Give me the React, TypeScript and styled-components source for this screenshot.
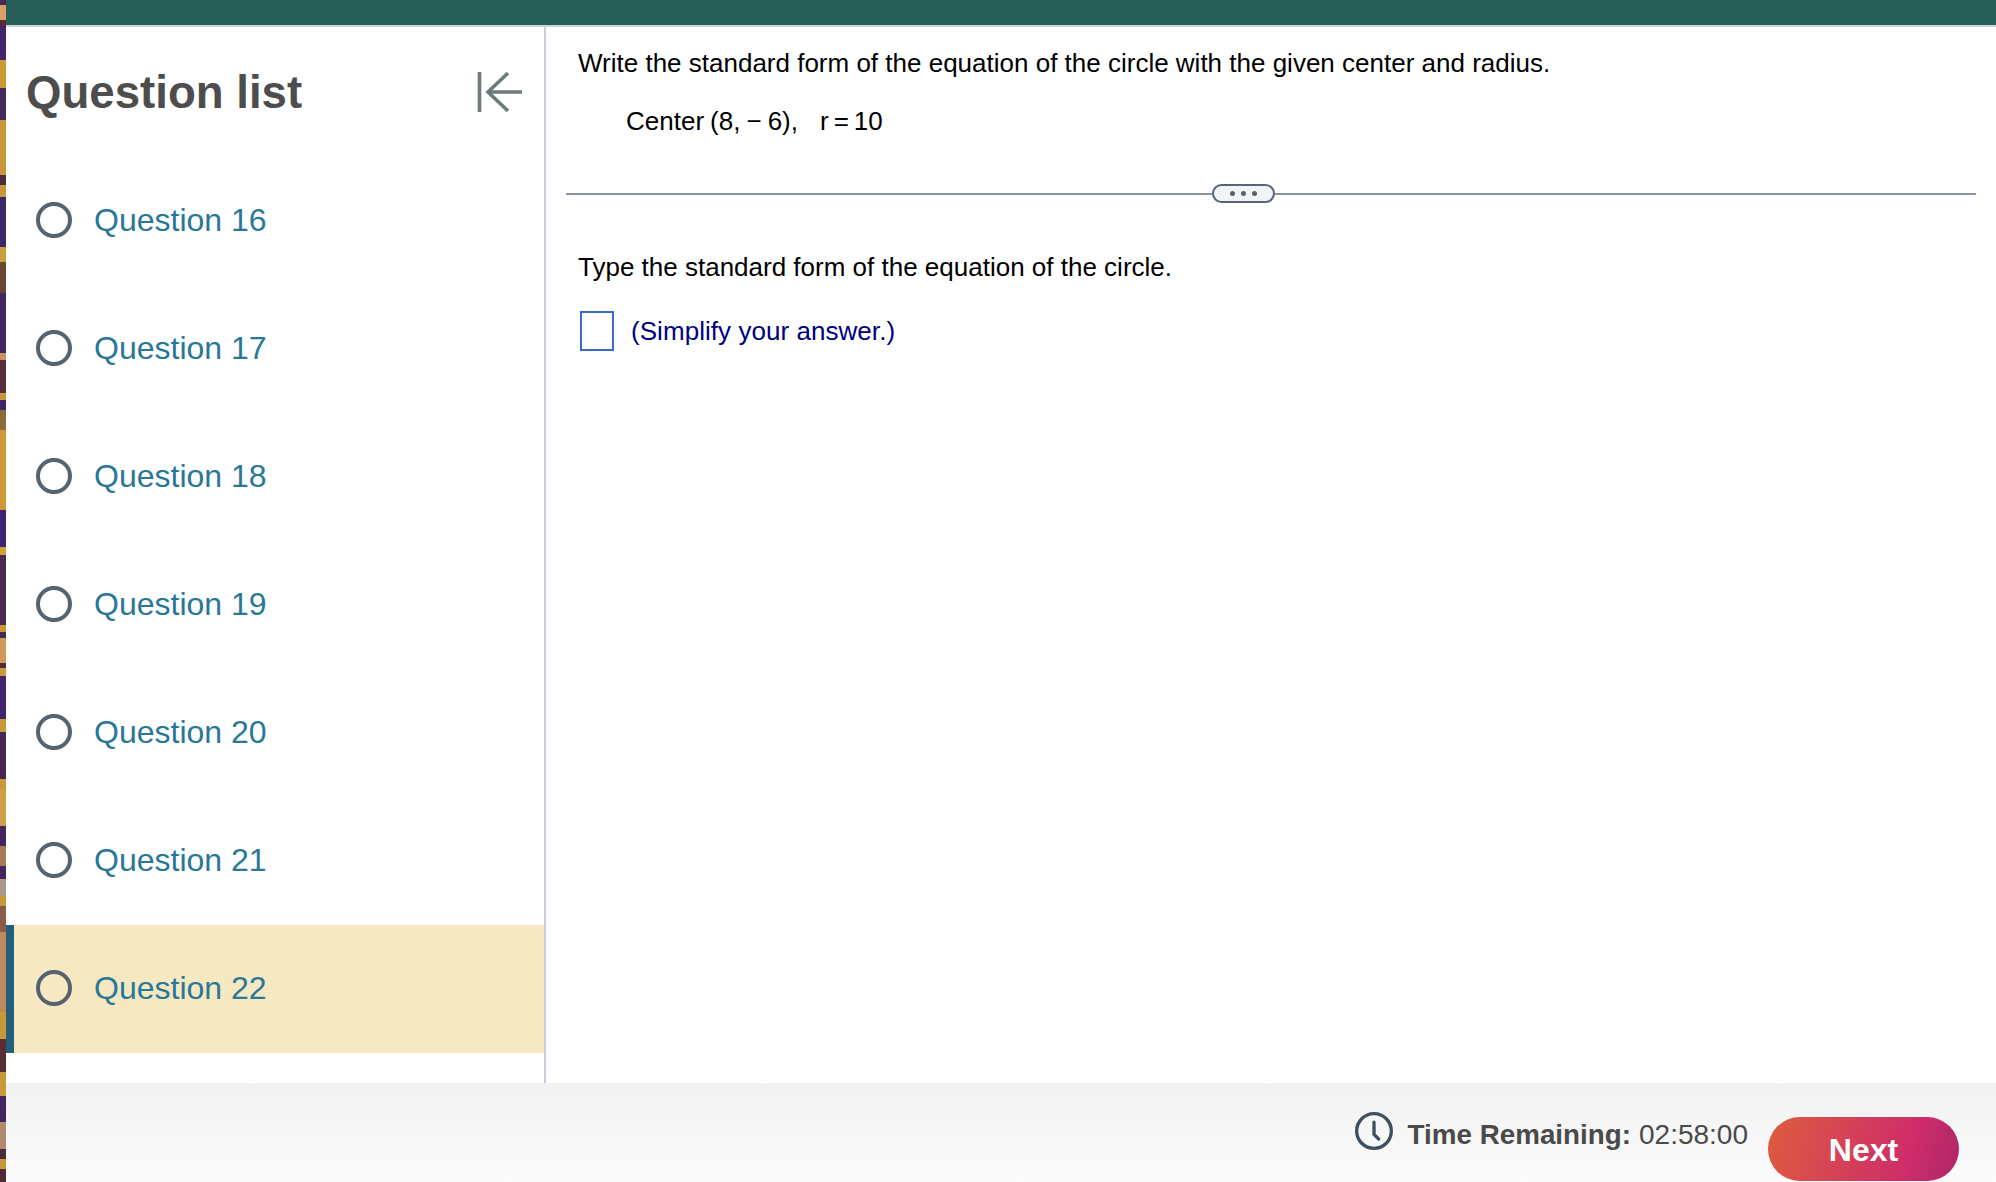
import React from 'react';
import styled, { createGlobalStyle } from 'styled-components';

const GlobalStyle = createGlobalStyle`
  html, body {
    margin: 0;
    padding: 0;
    background: #fff;
  }
  body {
    font-family: "Liberation Sans", Arial, sans-serif;
  }
`;

const Page = styled.div`
  display: flex;
  width: 1996px;
  height: 1182px;
  overflow: hidden;
`;

const Strip = styled.svg`
  display: block;
  flex: 0 0 6px;
  width: 6px;
  height: 1182px;
`;

const Main = styled.div`
  flex: 1;
  display: flex;
  flex-direction: column;
  min-width: 0;
`;

const TopBar = styled.div`
  flex: 0 0 25px;
  background: #285e58;
  border-bottom: 2px solid #c9d5d6;
`;

const Body = styled.div`
  flex: 1;
  display: flex;
  min-height: 0;
`;

const Sidebar = styled.aside`
  flex: 0 0 538px;
  border-right: 2px solid #c8d0de;
`;

const SidebarHeader = styled.div`
  height: 130px;
  display: flex;
  align-items: center;
  justify-content: space-between;
  padding: 2px 21px 0 20px;
  box-sizing: border-box;
`;

const Title = styled.h1`
  margin: 0;
  font-size: 45.6px;
  line-height: 52px;
  font-weight: 700;
  color: #4d4d4d;
`;

const CollapseIcon = styled.svg`
  display: block;
  width: 46px;
  height: 42px;
  margin-top: -3px;
`;

const QuestionRow = styled.div<{ $current?: boolean }>`
  height: 128px;
  display: flex;
  align-items: center;
  gap: 22px;
  box-sizing: border-box;
  padding-left: ${(p) => (p.$current ? '22px' : '30px')};
  padding-bottom: 3px;
  background: ${(p) => (p.$current ? '#f6e9c1' : 'transparent')};
  border-left: ${(p) => (p.$current ? '8px solid #235f7a' : 'none')};
`;

const Radio = styled.span`
  flex: 0 0 36px;
  width: 36px;
  height: 36px;
  box-sizing: border-box;
  border: 4px solid #56626f;
  border-radius: 50%;
`;

const QuestionLabel = styled.span`
  font-size: 32px;
  line-height: 40px;
  color: #2a7898;
`;

const Content = styled.main`
  flex: 1;
  min-width: 0;
  padding-top: 20px;
`;

const Prompt = styled.p`
  margin: 0 0 0 32px;
  font-size: 26px;
  line-height: 32px;
  color: #000;
`;

const Given = styled.p`
  margin: 26px 0 0 80px;
  font-size: 26px;
  line-height: 32px;
  color: #000;
  word-spacing: -1.2px;
`;

const Radius = styled.span`
  margin-left: 22px;
  word-spacing: -2.2px;
`;

const Divider = styled.div`
  display: flex;
  align-items: center;
  margin: 47px 0 0 20px;
  width: 1410px;
`;

const DividerLine = styled.span<{ $width?: number }>`
  flex: ${(p) => (p.$width ? `0 0 ${p.$width}px` : '1')};
  height: 2px;
  background: #8a92a4;
`;

const DividerPill = styled.span`
  flex: 0 0 63px;
  height: 19px;
  box-sizing: border-box;
  display: flex;
  align-items: center;
  justify-content: center;
  gap: 6px;
  background: #f3f4f7;
  border: 2px solid #56657a;
  border-radius: 10px;
`;

const Dot = styled.i`
  width: 5px;
  height: 5px;
  border-radius: 50%;
  background: #56626f;
`;

const Instruction = styled.p`
  margin: 48px 0 0 32px;
  font-size: 26px;
  line-height: 32px;
  color: #000;
`;

const AnswerRow = styled.div`
  display: flex;
  align-items: center;
  gap: 17px;
  margin: 28px 0 0 34px;
`;

const AnswerBox = styled.span`
  width: 34px;
  height: 40px;
  box-sizing: border-box;
  border: 2px solid #3a6cc6;
`;

const Hint = styled.span`
  font-size: 26px;
  line-height: 32px;
  letter-spacing: 0.05px;
  color: #000080;
`;

const Footer = styled.footer`
  flex: 0 0 99px;
  display: flex;
  justify-content: flex-end;
  align-items: flex-start;
  box-sizing: border-box;
  padding: 28px 37px 0 0;
  background: linear-gradient(180deg, #f2f2f2 0%, #fbfbfb 100%);
`;

const Timer = styled.div`
  display: flex;
  align-items: center;
  height: 38px;
  color: #4a4a4a;
`;

const ClockIcon = styled.svg`
  display: block;
  width: 40px;
  height: 40px;
  margin: 2px 14px 0 0;
`;

const TimerLabel = styled.strong`
  font-size: 27.8px;
  line-height: 40px;
  margin-top: 9px;
`;

const TimerValue = styled.span`
  font-size: 28px;
  line-height: 40px;
  margin: 9px 0 0 8px;
`;

const NextButton = styled.button`
  width: 191px;
  height: 64px;
  margin: 6px 0 0 20px;
  padding: 3px 0 0;
  border: none;
  border-radius: 32px;
  background: linear-gradient(105deg, #dd5c3e 0%, #cf2d69 72%, #ae2668 100%);
  color: #fff;
  font-family: inherit;
  font-size: 32px;
  font-weight: 700;
  line-height: 61px;
`;

// bands of the page background that shows down the left edge
const stripBands: [number, string][] = [
  [5, '#4a2a55'], [15, '#d9a066'], [6, '#5a2a3c'], [34, '#40256e'], [28, '#c99a32'],
  [32, '#47285e'], [55, '#c9983a'], [10, '#4a2f3a'], [12, '#c9983a'], [50, '#3c2768'],
  [15, '#c9a03a'], [31, '#6a4434'], [60, '#41265f'], [7, '#c98f5c'], [33, '#5a2c40'],
  [7, '#c9983a'], [10, '#3f2566'], [20, '#8a6a38'], [80, '#cc9a3a'], [37, '#3e2470'],
  [8, '#d0a03a'], [70, '#4a2a4e'], [7, '#c9983a'], [6, '#3e2a4c'], [25, '#cf9a5a'],
  [5, '#4a2a3c'], [8, '#c9983a'], [43, '#40256a'], [13, '#c9983a'], [47, '#472750'],
  [10, '#c9983a'], [37, '#cf9f4a'], [20, '#42285e'], [20, '#a87a58'], [13, '#42285e'],
  [17, '#a99a88'], [10, '#c9983a'], [26, '#8a5a4a'], [80, '#c08a5c'], [27, '#c9983a'],
  [33, '#5a2c34'], [24, '#c9983a'], [26, '#40265e'], [27, '#b08a6a'], [10, '#4a2a3c'],
  [10, '#c9983a'], [14, '#4f2a3a'],
];

const renderStrip = () => {
  let y = 0;
  return stripBands.map(([h, color]) => {
    const band = <rect key={y} x="0" y={y} width="6" height={h} fill={color} />;
    y += h;
    return band;
  });
};

const questions = [16, 17, 18, 19, 20, 21, 22];

const App = () => {
  return (
    <>
      <GlobalStyle />
      <Page>
        <Strip viewBox="0 0 6 1182" preserveAspectRatio="none">
          {renderStrip()}
        </Strip>
        <Main>
          <TopBar />
          <Body>
            <Sidebar>
              <SidebarHeader>
                <Title>Question list</Title>
                <CollapseIcon viewBox="0 0 46 42" fill="none" stroke="#6f7a7c" strokeWidth="3.6">
                  <path d="M2.5 1v40" />
                  <path d="M45 21H11" />
                  <path d="M31 2 11 21l20 19" />
                </CollapseIcon>
              </SidebarHeader>
              {questions.map((n) => (
                <QuestionRow key={n} $current={n === 22}>
                  <Radio />
                  <QuestionLabel>Question {n}</QuestionLabel>
                </QuestionRow>
              ))}
            </Sidebar>
            <Content>
              <Prompt>Write the standard form of the equation of the circle with the given center and radius.</Prompt>
              <Given>
                Center (8, − 6),
                <Radius>r = 10</Radius>
              </Given>
              <Divider>
                <DividerLine $width={646} />
                <DividerPill>
                  <Dot />
                  <Dot />
                  <Dot />
                </DividerPill>
                <DividerLine />
              </Divider>
              <Instruction>Type the standard form of the equation of the circle.</Instruction>
              <AnswerRow>
                <AnswerBox />
                <Hint>(Simplify your answer.)</Hint>
              </AnswerRow>
            </Content>
          </Body>
          <Footer>
            <Timer>
              <ClockIcon viewBox="0 0 24 24" fill="none" stroke="#3f4f60" strokeWidth="2" strokeLinecap="round">
                <circle cx="12" cy="12" r="10.4" />
                <path d="M12 6.7V14l2.8 2.8" />
              </ClockIcon>
              <TimerLabel>Time Remaining:</TimerLabel>
              <TimerValue>02:58:00</TimerValue>
            </Timer>
            <NextButton>Next</NextButton>
          </Footer>
        </Main>
      </Page>
    </>
  );
};

export default App;
